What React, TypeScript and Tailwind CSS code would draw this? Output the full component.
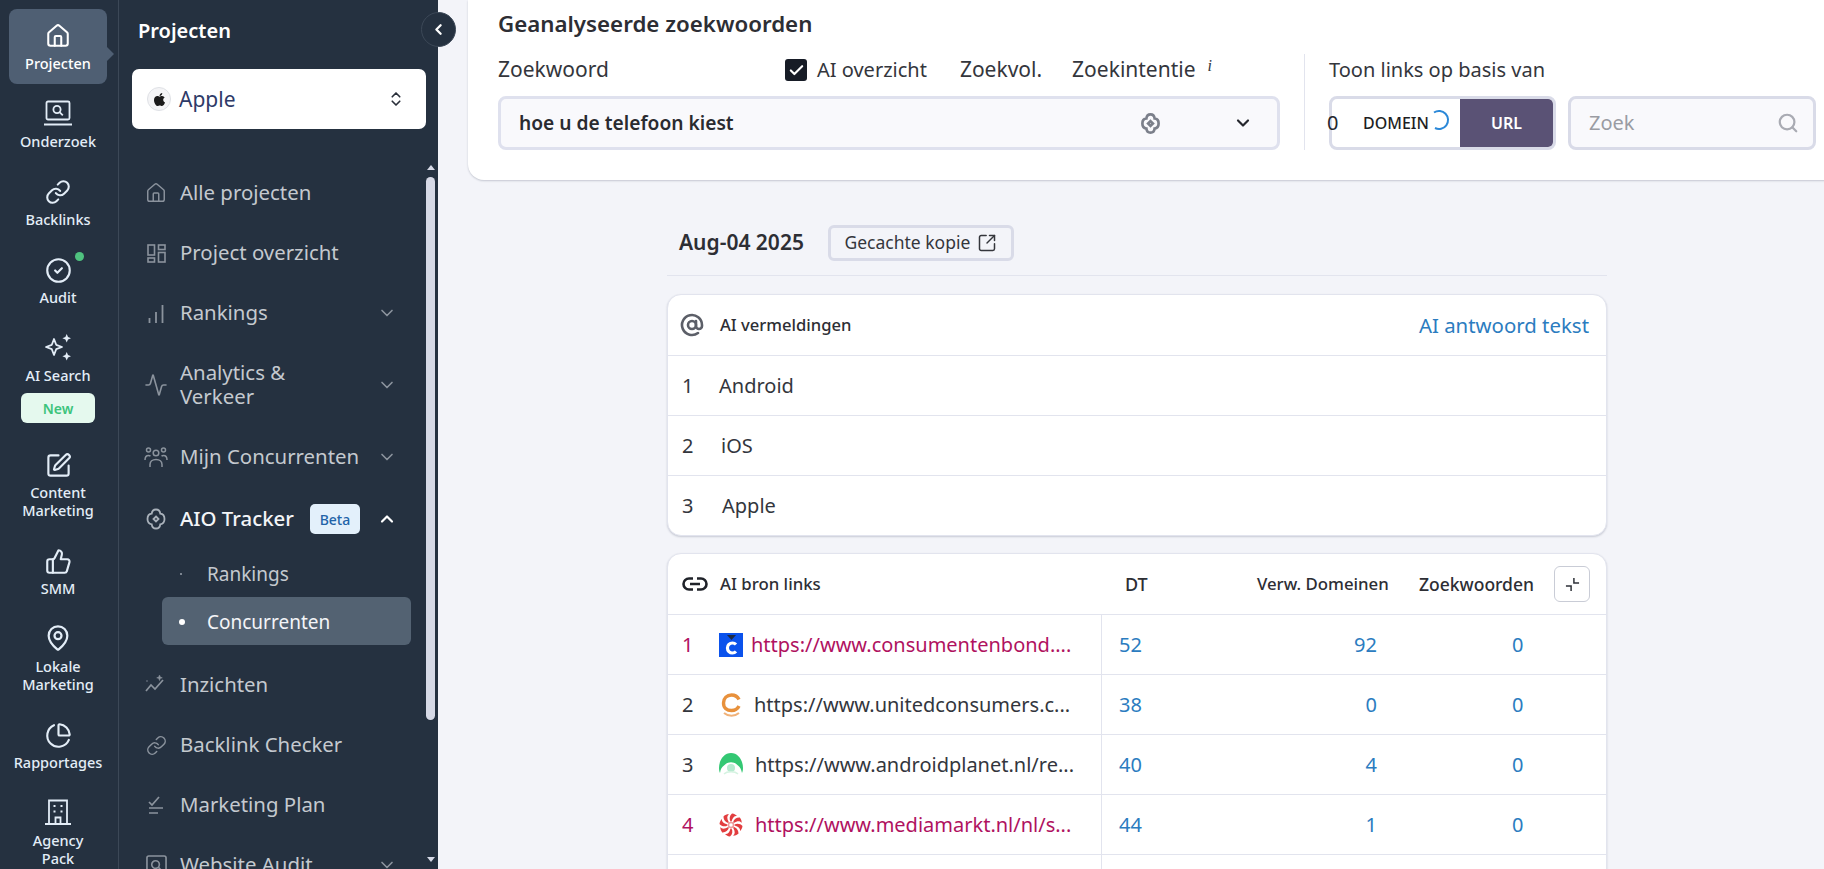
import React from "react";
import {
  House, Link as LinkIcon, CircleCheck, SquarePen, ThumbsUp, MapPin, ChartPie,
  ChevronDown, ChevronUp, ChevronLeft, ChevronsUpDown, Activity,
  AtSign, SquareArrowOutUpRight, Search, Check,
} from "lucide-react";
import { FaApple } from "react-icons/fa";

const ic = { strokeWidth: 1.9 };

function LaptopSearch({ className = "" }: { className?: string }) {
  return (
    <svg viewBox="0 0 28 28" className={className} fill="none" stroke="currentColor" strokeWidth="1.8">
      <rect x="2.5" y="2.5" width="23" height="18" rx="1.5" />
      <path d="M0 25.5h28" strokeWidth="2" />
      <circle cx="13" cy="10.5" r="3.6" />
      <path d="M15.8 13.3l3 3" />
    </svg>
  );
}
function SparkleIcon() {
  return (
    <svg viewBox="0 0 27 27" className="w-[27px] h-[27px]" fill="none" stroke="currentColor" strokeWidth="1.8" strokeLinejoin="round">
      <path d="M9 5l2.200 5.800L17 13l-5.800 2.200L9 21l-2.200-5.800L1 13l5.800-2.200z" />
      <path d="M21.700 0l1.300 3 3 1.300-3 1.300-1.300 3-1.300-3-3-1.300 3-1.300zM21.700 18l1.300 3 3 1.300-3 1.300-1.300 3-1.300-3-3-1.300 3-1.300z" fill="currentColor" stroke="none" />
    </svg>
  );
}
function BuildingIcon() {
  return (
    <svg viewBox="0 0 26 26" className="w-[26px] h-[26px]" fill="none" stroke="currentColor" strokeWidth="1.8">
      <path d="M4 25V1.500h18V25" />
      <path d="M0 25h26" strokeWidth="2" />
      <path d="M10.500 25v-6.500h5V25" />
      <path d="M8.500 7h2M15.500 7h2M8.500 12.500h2M15.500 12.500h2" strokeWidth="2" />
    </svg>
  );
}
function GridIcon() {
  return (
    <svg viewBox="0 0 19 19" className="w-[19px] h-[19px]" fill="none" stroke="currentColor" strokeWidth="1.6">
      <rect x="1" y="1" width="6.500" height="10" /><rect x="11.500" y="1" width="6.500" height="4.500" />
      <rect x="1" y="14" width="6.500" height="4" /><rect x="11.500" y="8.500" width="6.500" height="9.500" />
    </svg>
  );
}
function BarsIcon() {
  return (
    <svg viewBox="0 0 16 19" className="w-[16px] h-[19px]" fill="none" stroke="currentColor" strokeWidth="1.800">
      <path d="M1.500 19v-5M8 19V8M14.500 19V1" />
    </svg>
  );
}
function PeopleIcon() {
  return (
    <svg viewBox="0 0 24 21" className="w-[24px] h-[21px]" fill="none" stroke="currentColor" strokeWidth="1.500">
      <circle cx="12" cy="6" r="2.800" /><circle cx="4.500" cy="3" r="2" /><circle cx="19.500" cy="3" r="2" />
      <path d="M6 20v-2.500c0-3 2.500-5 6-5s6 2 6 5V20" />
      <path d="M1 13c0-2.500 1.300-4.500 3.500-4.500.8 0 1.500.2 2 .6M23 13c0-2.500-1.300-4.500-3.500-4.500-.8 0-1.500.2-2 .6" />
    </svg>
  );
}
function AioIcon({ className = "", w = "1.800" }: { className?: string; w?: string }) {
  return (
    <svg viewBox="0 0 22 22" className={className} fill="none" stroke="currentColor" strokeWidth={w}>
      <path d="M11 1.500c2.600 0 4 1.800 4.300 4.200 2.400.3 4.200 1.700 4.200 5.300s-1.800 5-4.200 5.300c-.3 2.400-1.700 4.200-4.300 4.200s-4-1.800-4.300-4.200C4.300 16 2.500 14.600 2.500 11s1.800-5 4.200-5.300C7 3.300 8.400 1.500 11 1.500z" />
      <path d="M11 8.500l2.500 2.500-2.500 2.500L8.500 11z" />
    </svg>
  );
}
function TrendIcon() {
  return (
    <svg viewBox="0 0 22 22" className="w-[22px] h-[22px]" fill="none" stroke="currentColor" strokeWidth="1.700">
      <path d="M1 17l5-6 4 4 8-9" />
      <path d="M14.500 1l.8 2 2 .8-2 .8-.8 2-.8-2-2-.8 2-.8z" fill="currentColor" strokeWidth="0.500" />
      <path d="M1.500 7h1" />
    </svg>
  );
}
function PlanIcon() {
  return (
    <svg viewBox="0 0 16 20" className="w-[16px] h-[20px]" fill="none" stroke="currentColor" strokeWidth="1.700">
      <path d="M1 7l3 3 7-8" /><path d="M1 13h14M1 18h9" />
    </svg>
  );
}
function AuditIcon() {
  return (
    <svg viewBox="0 0 22 22" className="w-[21px] h-[21px]" fill="none" stroke="currentColor" strokeWidth="1.700">
      <rect x="1" y="1" width="20" height="20" rx="2" /><circle cx="10" cy="10" r="4" /><path d="M13 13l4 4" />
    </svg>
  );
}
function ExpandIn() {
  return (
    <svg viewBox="0 0 16 16" className="w-[15px] h-[15px]" fill="none" stroke="#2e3138" strokeWidth="1.600">
      <path d="M9.500 1v5.500H15M1 9.500h5.500V15" />
    </svg>
  );
}

function BondIcon() {
  return (
    <svg viewBox="0 0 24 24" className="w-[24px] h-[24px] shrink-0">
      <rect width="24" height="24" fill="#0b52ec" />
      <path d="M8 2h9l-4.500 5z" fill="#1e2a44" />
      <path d="M17 11.500a5 5 0 1 0 0 7" fill="none" stroke="#fff" strokeWidth="3.200" />
    </svg>
  );
}
function UnitedIcon() {
  return (
    <svg viewBox="0 0 24 24" className="w-[24px] h-[24px] shrink-0">
      <path d="M20 6.500C18.500 3.500 15.500 2 12.500 2 8 2 4.500 5 4.500 10s3.500 7.500 8 7.500c3 0 6-1.300 7.500-4.500" fill="none" stroke="#e8913c" strokeWidth="3.400" />
      <path d="M5 20c4 3.500 11 3.500 15 0" fill="none" stroke="#f0b27a" strokeWidth="2" />
    </svg>
  );
}
function PlanetIcon() {
  return (
    <svg viewBox="0 0 24 24" className="w-[24px] h-[24px] shrink-0">
      <path d="M0 15C0 7 5 0 12 0s12 7 12 15c0 2-.5 4-1 5-1-4-2-6-4-7.500a9 9 0 0 0-14 0C3 14 1.500 16 1 20c-.5-1-1-3-1-5z" fill="#33c873" />
      <circle cx="12" cy="15" r="4" fill="#b7ead0" />
      <path d="M5 21c3-3 11-3 14 0" fill="none" stroke="#d5f3e1" strokeWidth="1.500" />
    </svg>
  );
}
function MarktIcon() {
  const arms = [0, 45, 90, 135, 180, 225, 270, 315];
  return (
    <svg viewBox="0 0 24 24" className="w-[24px] h-[24px] shrink-0">
      {arms.map((a) => (
        <path key={a} transform={`rotate(${a} 12 12)`} d="M11.500 8.500C10 6 10.500 2.500 13 .5c2.500.3 4 1.300 5 2.500-2.500-.5-4.500 1.500-5.500 5.500z" fill="#e23d3f" />
      ))}
      <circle cx="12" cy="12" r="2.500" fill="none" stroke="#ef9a9b" strokeWidth="1.500" />
    </svg>
  );
}

function RailItem({ icon, label, h, active, mt, dot, extra }: { icon: React.ReactNode; label: React.ReactNode; h: string; active?: boolean; mt: string; dot?: boolean; extra?: React.ReactNode }) {
  return (
    <div className={`relative flex flex-col items-center pt-[13px] mx-[9px] w-[98px] shrink-0 ${h} ${active ? "bg-[#4f5f73] rounded-[8px] text-white" : "text-[#e3edf7]"}`}>
      <div className="relative h-[28px] w-[28px] flex items-center justify-center">
        {icon}
        {dot && <span className="absolute -right-[12px] -top-[4px] w-[9px] h-[9px] rounded-full bg-[#4fc27f]" />}
      </div>
      <div className={`${mt} text-[14.5px] font-medium leading-[18px] text-center whitespace-nowrap`}>{label}</div>
      {extra}
      {active && <span className="absolute -right-[7px] top-[37px] w-0 h-0 border-y-[8px] border-y-transparent border-l-[8px] border-l-[#4f5f73]" />}
    </div>
  );
}

function NavItem({ icon, label, chevron, h = "h-[60px]", bright, badge }: { icon: React.ReactNode; label: React.ReactNode; chevron?: "down" | "up"; h?: string; bright?: boolean; badge?: boolean }) {
  return (
    <div className={`flex items-center pl-[25px] pr-[29px] shrink-0 ${h}`}>
      <div className={`w-[24px] h-[24px] flex items-center justify-center ${bright ? "text-[#aab2bb]" : "text-[#8b939d]"}`}>{icon}</div>
      <div className={`ml-[12px] pb-[2px] text-[20.4px] leading-[24px] ${bright ? "text-[#f3f5f8] font-medium" : "text-[#c4c9cf]"}`}>{label}</div>
      {badge && <span className="ml-[16px] h-[30px] w-[50px] rounded-[5px] bg-[#e3f0fb] text-[#2263a8] text-[14px] font-medium flex items-center justify-center">Beta</span>}
      {chevron && (
        <div className={`ml-auto ${chevron === "up" ? "text-white" : "text-[#8b939d]"}`}>
          {chevron === "up" ? <ChevronUp size={20} strokeWidth={2.6} /> : <ChevronDown size={20} strokeWidth={2} />}
        </div>
      )}
    </div>
  );
}

function MentionRow({ n, name, ml }: { n: number; name: string; ml: string }) {
  return (
    <div className="flex items-center h-[60px] border-t border-[#e2e4ee] pl-[14px] text-[20px] text-[#33363d]">
      <span className="w-[15px]">{n}</span>
      <span className={ml}>{name}</span>
    </div>
  );
}

function LinkRow({ n, icon, url, visited, dt, refs, textMl }: { n: number; icon: React.ReactNode; url: string; visited?: boolean; dt: string; refs: string; textMl: string }) {
  return (
    <div className="flex h-[60px] border-t border-[#e2e4ee] text-[20px] items-stretch shrink-0">
      <div className={`w-[434px] flex items-center pl-[14px] border-r border-[#e2e4ee] overflow-hidden ${visited ? "text-[#b0125f]" : "text-[#33363d]"}`}>
        <span className="w-[37px] shrink-0">{n}</span>
        {icon}
        <span className={`${textMl} whitespace-nowrap`}>{url}</span>
      </div>
      <div className="w-[154px] pl-[17px] flex items-center text-[#2b7cc0]">{dt}</div>
      <div className="w-[162px] pr-[41px] flex items-center justify-end text-[#2b7cc0]">{refs}</div>
      <div className="pl-[94px] flex items-center text-[#2b7cc0]">0</div>
    </div>
  );
}

export default function App() {
  return (
    <div className="relative flex h-[869px] w-full overflow-hidden bg-[#f3f4f9] font-['Noto_Sans',sans-serif]">
      {/* Icon rail */}
      <aside className="w-[119px] shrink-0 bg-[#253140] border-r border-[#3c4857] pt-[9px] flex flex-col overflow-hidden">
        <RailItem active h="h-[75px] mb-[2px]" mt="mt-[4px]" label="Projecten" icon={<House size={26} {...ic} />} />
        <RailItem h="h-[79px]" mt="mt-[5px]" label="Onderzoek" icon={<LaptopSearch className="w-[28px] h-[28px]" />} />
        <RailItem h="h-[78px]" mt="mt-[4px]" label="Backlinks" icon={<LinkIcon size={26} {...ic} />} />
        <RailItem dot h="h-[77px]" mt="mt-[4px]" label="Audit" icon={<CircleCheck size={27} {...ic} />} />
        <RailItem h="h-[118px]" mt="mt-[5px]" label="AI Search" icon={<SparkleIcon />}
          extra={<span className="mt-[9px] w-[74px] h-[30px] rounded-[6px] bg-[#e5f9ee] text-[#3cc47c] text-[14px] font-semibold flex items-center justify-center">New</span>} />
        <RailItem h="h-[96px]" mt="mt-[4px]" label={<>Content<br />Marketing</>} icon={<SquarePen size={27} {...ic} />} />
        <RailItem h="h-[77px]" mt="mt-[4px]" label="SMM" icon={<ThumbsUp size={27} {...ic} />} />
        <RailItem h="h-[97px]" mt="mt-[5px]" label={<>Lokale<br />Marketing</>} icon={<MapPin size={28} {...ic} />} />
        <RailItem h="h-[78px]" mt="mt-[4px]" label="Rapportages" icon={<ChartPie size={27} {...ic} />} />
        <RailItem h="h-[78px]" mt="mt-[6px]" label={<>Agency<br />Pack</>} icon={<BuildingIcon />} />
      </aside>

      {/* Project sidebar */}
      <aside className="relative w-[319px] shrink-0 bg-[#253140] flex flex-col">
        <div className="pl-[19px] pt-[19px] h-[69px] text-[20px] leading-[24px] font-semibold text-white shrink-0">Projecten</div>
        <div className="ml-[13px] w-[294px] h-[60px] rounded-[7px] bg-white flex items-center pl-[15px] pr-[21px] shrink-0">
          <span className="w-[24px] h-[24px] rounded-full border border-[#dfe1e6] flex items-center justify-center bg-[#f4f4f6]">
            <FaApple size={15} color="#1a1a1a" />
          </span>
          <span className="ml-[8px] pt-[2px] text-[21px] text-[#2e3a67]">Apple</span>
          <ChevronsUpDown size={18} strokeWidth={2.2} color="#2a2f3a" className="ml-auto" />
        </div>
        <div className="flex flex-1 min-h-0 pt-[34px] overflow-hidden">
          <nav className="w-[307px] flex flex-col shrink-0">
            <NavItem label="Alle projecten" icon={<House size={22} strokeWidth={1.6} />} />
            <NavItem label="Project overzicht" icon={<GridIcon />} />
            <NavItem label="Rankings" chevron="down" icon={<BarsIcon />} />
            <NavItem h="h-[84px]" label={<>Analytics &amp;<br />Verkeer</>} chevron="down" icon={<Activity size={24} strokeWidth={1.6} />} />
            <NavItem h="h-[60px] mb-[2px]" label="Mijn Concurrenten" chevron="down" icon={<PeopleIcon />} />
            <NavItem bright label="AIO Tracker" chevron="up" badge icon={<AioIcon className="w-[22px] h-[22px]" />} />
            <div className="flex items-center h-[48px] pl-[61px] pt-[2px] shrink-0 text-[19px] text-[#c4c9cf]">
              <span className="w-[2px] h-[2px] rounded-full bg-[#9aa2ac]" />
              <span className="ml-[25px]">Rankings</span>
            </div>
            <div className="flex items-center h-[48px] ml-[43px] w-[249px] pl-[17px] pt-[2px] shrink-0 rounded-[6px] bg-[#536272] text-[19px] text-[#f3f5f8]">
              <span className="w-[6px] h-[6px] rounded-full bg-white" />
              <span className="ml-[22px]">Concurrenten</span>
            </div>
            <div className="h-[10px] shrink-0" />
            <NavItem label="Inzichten" icon={<TrendIcon />} />
            <NavItem label="Backlink Checker" icon={<LinkIcon size={21} strokeWidth={1.7} />} />
            <NavItem label="Marketing Plan" icon={<PlanIcon />} />
            <NavItem label="Website Audit" chevron="down" icon={<AuditIcon />} />
          </nav>
          <div className="w-[9px] flex flex-col items-center shrink-0 mt-[2px]">
            <span className="w-0 h-0 border-x-[4.5px] border-x-transparent border-b-[5px] border-b-[#d6d9e6]" />
            <span className="w-[9px] h-[543px] mt-[7px] rounded-full bg-[#d6d9e6] shrink-0" />
            <span className="w-0 h-0 border-x-[4.5px] border-x-transparent border-t-[5px] border-t-[#d6d9e6] mt-[137px]" />
          </div>
        </div>
        <button className="absolute -right-[18px] top-[12px] w-[35px] h-[35px] rounded-full bg-[#253140] border border-[#3c4857] flex items-center justify-center z-10">
          <ChevronLeft size={17} strokeWidth={3.2} color="#fff" />
        </button>
      </aside>

      {/* Main */}
      <main className="flex-1 min-w-0 flex flex-col overflow-hidden">
        <section className="ml-[30px] -mr-[40px] h-[180px] shrink-0 rounded-bl-[16px] bg-white shadow-[0_1px_2px_rgba(30,40,70,0.22)] pl-[30px]">
          <h2 className="pt-[10px] h-[54px] text-[22.3px] leading-[28px] font-semibold text-[#2d2e34]">Geanalyseerde zoekwoorden</h2>
          <div className="flex">
            <div className="w-[782px] shrink-0">
              <div className="flex items-center h-[32px] text-[20px] text-[#34363c]">
                <span className="w-[287px] text-[21px]">Zoekwoord</span>
                <span className="w-[22px] h-[22px] rounded-[3px] bg-[#171c26] flex items-center justify-center">
                  <Check size={17} strokeWidth={3} color="#fff" />
                </span>
                <span className="ml-[10px]">AI overzicht</span>
                <span className="ml-[33px] text-[21px]">Zoekvol.</span>
                <span className="ml-[30px] text-[21px]">Zoekintentie</span>
                <span className="ml-[12px] -mt-[8px] text-[16px] italic font-['Liberation_Serif',serif]">i</span>
              </div>
              <div className="mt-[10px] h-[54px] rounded-[8px] border-[3px] border-[#dfe1ee] bg-[#f9f9fc] flex items-center pl-[18px] pr-[24px]">
                <span className="text-[19.2px] font-semibold text-[#2a2b30]">hoe u de telefoon kiest</span>
                <span className="ml-auto text-[#7b7f8a]"><AioIcon className="w-[21px] h-[21px]" w="2.800" /></span>
                <ChevronDown size={20} strokeWidth={2.6} color="#25272d" className="ml-[72px]" />
              </div>
            </div>
            <div className="ml-[24px] w-px bg-[#e2e4ee] h-[96px]" />
            <div className="ml-[24px]">
              <div className="h-[32px] flex items-center text-[20px] text-[#34363c]">Toon links op basis van</div>
              <div className="mt-[10px] flex gap-[12px]">
                <div className="relative w-[227px] h-[54px] rounded-[8px] border-[3px] border-[#d9dbe8] bg-white flex overflow-hidden">
                  <div className="w-[128px] flex items-center pl-[31px] text-[16px] font-medium text-[#1e1f24]">DOMEIN</div>
                  <div className="flex-1 bg-[#5a5275] rounded-r-[4px] flex items-center justify-center text-white text-[16px] font-semibold">URL</div>
                </div>
                <div className="w-[248px] h-[54px] rounded-[8px] border-[3px] border-[#d9dbe8] bg-[#f9f9fc] flex items-center pl-[18px] pr-[14px] text-[20px] text-[#9a9ca3]">
                  Zoek
                  <Search size={22} strokeWidth={2.4} color="#a9abb3" className="ml-auto" />
                </div>
              </div>
            </div>
          </div>
        </section>

        <div className="ml-[229px] w-[940px] flex flex-col">
          <div className="mt-[45px] h-[51px] pb-[15px] border-b border-[#e2e4ee] pl-[12px] flex items-center">
            <span className="text-[21px] font-semibold text-[#2d2e34]">Aug-04 2025</span>
            <span className="ml-[24px] w-[186px] h-[36px] rounded-[6px] border-[3px] border-[#d9dbe8] flex items-center justify-center text-[17.5px] text-[#34363c]">
              Gecachte kopie
              <SquareArrowOutUpRight size={20} strokeWidth={1.8} className="ml-[7px]" />
            </span>
          </div>

          <div className="mt-[18px] h-[242px] rounded-[14px] bg-white border border-[#e2e4ee] shadow-[0_1px_2px_rgba(30,40,70,0.2)] flex flex-col overflow-hidden">
            <div className="h-[60px] flex items-center pl-[12px] pr-[17px] shrink-0">
              <AtSign size={24} strokeWidth={2.6} color="#5c5f68" />
              <span className="ml-[16px] text-[16.6px] font-medium text-[#2d2e34]">AI vermeldingen</span>
              <span className="ml-auto text-[20.4px] text-[#2b7cc0]">AI antwoord tekst</span>
            </div>
            <MentionRow n={1} name="Android" ml="ml-[22px]" />
            <MentionRow n={2} name="iOS" ml="ml-[24px]" />
            <MentionRow n={3} name="Apple" ml="ml-[25px]" />
          </div>

          <div className="mt-[17px] h-[400px] rounded-t-[14px] bg-white border border-[#e2e4ee] shadow-[0_1px_2px_rgba(30,40,70,0.2)] flex flex-col overflow-hidden">
            <div className="h-[60px] flex items-center shrink-0 text-[16.8px] font-medium text-[#2d2e34]">
              <div className="w-[434px] pl-[14px] flex items-center">
                <svg viewBox="0 0 26 14" className="w-[26px] h-[14px]" fill="none" stroke="#1f2229" strokeWidth="2.600">
                  <path d="M11 1.500H7a5.500 5.500 0 0 0 0 11h4M15 1.500h4a5.500 5.500 0 0 1 0 11h-4M8 7h10" />
                </svg>
                <span className="ml-[12px]">AI bron links</span>
              </div>
              <div className="w-[155px] pl-[23px] text-[18px]">DT</div>
              <div className="w-[162px]">Verw. Domeinen</div>
              <div className="w-[135px] text-[17.5px]">Zoekwoorden</div>
              <div className="w-[36px] h-[36px] rounded-[6px] border border-[#c9ccd6] flex items-center justify-center"><ExpandIn /></div>
            </div>
            <LinkRow n={1} visited icon={<BondIcon />} url="https://www.consumentenbond...." dt="52" refs="92" textMl="ml-[8px]" />
            <LinkRow n={2} icon={<UnitedIcon />} url="https://www.unitedconsumers.c..." dt="38" refs="0" textMl="ml-[11px]" />
            <LinkRow n={3} icon={<PlanetIcon />} url="https://www.androidplanet.nl/re..." dt="40" refs="4" textMl="ml-[12px]" />
            <LinkRow n={4} visited icon={<MarktIcon />} url="https://www.mediamarkt.nl/nl/s..." dt="44" refs="1" textMl="ml-[12px]" />
            <div className="flex h-[60px] border-t border-[#e2e4ee] shrink-0"><div className="w-[434px] border-r border-[#e2e4ee]" /></div>
          </div>
        </div>
      </main>

      {/* Loading overlay on the toggle */}
      <span className="absolute left-[1327px] top-[111px] text-[20px] leading-[24px] text-[#25272d]">0</span>
      <svg viewBox="0 0 22 22" className="absolute left-[1429px] top-[109px] w-[22px] h-[22px]" fill="none" stroke="#2b88d8" strokeWidth="2">
        <path d="M5 3.500A9 9 0 1 1 6 19" />
      </svg>
    </div>
  );
}
